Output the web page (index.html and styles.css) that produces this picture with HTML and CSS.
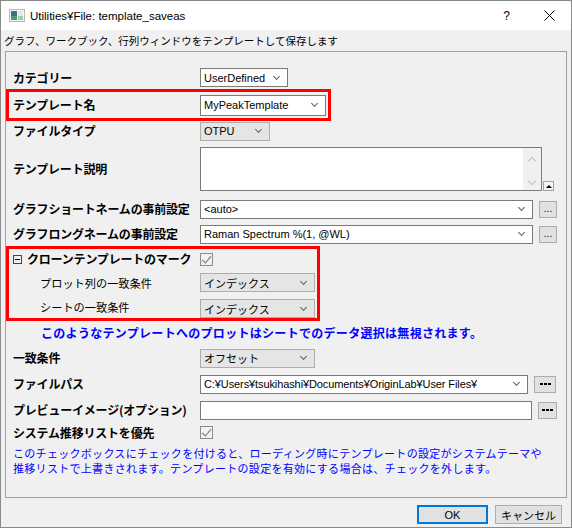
FILE: index.html
```html
<!DOCTYPE html>
<html lang="ja">
<head>
    <meta charset="UTF-8">
    <title>Utilities¥File: template_saveas</title>
    <link rel="stylesheet" href="styles.css">
</head>
<body>
<div class="dialog">
    <div class="titlebar">
        <svg class="app-icon" width="16" height="13" viewBox="0 0 16 13">
            <rect x="0.5" y="0.5" width="15" height="12" fill="#f6f6f6" stroke="#b8b8b8"/>
            <rect x="2" y="2" width="6" height="9" fill="#3b6f7a"/>
            <rect x="2" y="7" width="6" height="4" fill="#4f9a6a"/>
            <rect x="9" y="2" width="5" height="9" fill="#dfe8e3"/>
            <rect x="9" y="7" width="5" height="4" fill="#9ccfae"/>
        </svg>
        <span class="title">Utilities¥File: template_saveas</span>
        <span class="help">?</span>
        <svg class="close" width="11" height="11" viewBox="0 0 11 11">
            <path d="M0.5 0.5 L10.5 10.5 M10.5 0.5 L0.5 10.5" stroke="#000" stroke-width="1"/>
        </svg>
    </div>

    <div class="desc">グラフ、ワークブック、行列ウィンドウをテンプレートして保存します</div>

    <div class="panel">
        <div class="row h23">
            <label class="lbl">カテゴリー</label>
            <div class="combo" style="width:88px">UserDefined</div>
        </div>

        <div class="redbox box-name">
            <div class="row h26">
                <label class="lbl">テンプレート名</label>
                <div class="combo tall" style="width:126px">MyPeakTemplate</div>
            </div>
        </div>

        <div class="row h20">
            <label class="lbl">ファイルタイプ</label>
            <div class="combo off" style="width:70px">OTPU</div>
        </div>

        <div class="row memo-row">
            <label class="lbl">テンプレート説明</label>
            <div class="memo">
                <div class="memo-text"></div>
                <div class="vscroll">
                    <span class="chev up"></span>
                    <span class="chev down"></span>
                </div>
            </div>
            <div class="tiny-btn"><span class="tri"></span></div>
        </div>

        <div class="row h26 mt5">
            <label class="lbl">グラフショートネームの事前設定</label>
            <div class="combo" style="width:333px">&lt;auto&gt;</div>
            <div class="dots-btn" style="width:18px">...</div>
        </div>

        <div class="row h24">
            <label class="lbl">グラフロングネームの事前設定</label>
            <div class="combo" style="width:333px">Raman Spectrum %(1, @WL)</div>
            <div class="dots-btn" style="width:18px">...</div>
        </div>

        <div class="redbox box-clone">
            <div class="row h20">
                <label class="lbl"><svg class="collapse" width="9" height="9" viewBox="0 0 9 9">
                    <rect x="0.5" y="0.5" width="8" height="8" fill="none" stroke="#444"/>
                    <path d="M2 4.5 H7" stroke="#000"/>
                </svg>クローンテンプレートのマーク</label>
                <span class="check"></span>
            </div>
            <div class="row h27">
                <label class="lbl sub">プロット列の一致条件</label>
                <div class="combo off" style="width:115px">インデックス</div>
            </div>
            <div class="row h22">
                <label class="lbl sub">シートの一致条件</label>
                <div class="combo off bottom" style="width:115px">インデックス</div>
            </div>
        </div>

        <div class="note-bold">このようなテンプレートへのプロットはシートでのデータ選択は無視されます。</div>

        <div class="row h26">
            <label class="lbl">一致条件</label>
            <div class="combo off" style="width:115px">オフセット</div>
        </div>

        <div class="row h26">
            <label class="lbl">ファイルパス</label>
            <div class="combo path" style="width:328px">C:¥Users¥tsukihashi¥Documents¥OriginLab¥User Files¥</div>
            <div class="dots-btn dash" style="width:22px"><i></i><i></i><i></i></div>
        </div>

        <div class="row h26">
            <label class="lbl">プレビューイメージ(オプション)</label>
            <div class="field" style="width:332px"></div>
            <div class="dots-btn dash" style="width:19px"><i></i><i></i><i></i></div>
        </div>

        <div class="row h19">
            <label class="lbl">システム推移リストを優先</label>
            <span class="check"></span>
        </div>

        <div class="note">このチェックボックスにチェックを付けると、ローディング時にテンプレートの設定がシステムテーマや<br>推移リストで上書きされます。テンプレートの設定を有効にする場合は、チェックを外します。</div>
    </div>

    <div class="footer">
        <button class="btn default">OK</button>
        <button class="btn">キャンセル</button>
    </div>
</div>
</body>
</html>
```

FILE: styles.css
```css
body {
    margin: 0;
    background: #fff;
    font-family: "Noto Sans CJK JP", sans-serif;
    color: #000;
}
.dialog {
    width: 572px;
    height: 528px;
    box-sizing: border-box;
    border: 1px solid #8a8a8a;
    background: #f0f0f0;
}

/* title bar */
.titlebar {
    height: 29px;
    background: #fff;
    display: flex;
    align-items: center;
}
.app-icon {
    margin-left: 8px;
}
.title {
    margin-left: 5px;
    font: 11.5px "Liberation Sans", sans-serif;
}
.help {
    margin-left: auto;
    font: 12px "Liberation Sans", sans-serif;
}
.close {
    margin-left: 34px;
    margin-right: 16px;
}
.desc {
    height: 21px;
    line-height: 21px;
    padding-left: 3px;
    font-size: 10.5px;
    white-space: nowrap;
}

/* main group box */
.panel {
    margin-left: 4px;
    width: 562px;
    height: 447px;
    box-sizing: border-box;
    border: 1px solid #a0a0a0;
    padding-top: 14px;
}
.row {
    display: flex;
    align-items: center;
    padding-left: 7px;
}
.h19 { height: 19px; }
.h20 { height: 20px; }
.h22 { height: 22px; }
.h23 { height: 23px; }
.h24 { height: 24px; }
.h26 { height: 26px; }
.h27 { height: 27px; }
.mt5 { margin-top: 5px; }

.lbl {
    width: 187px;
    flex: none;
    box-sizing: border-box;
    display: flex;
    align-items: center;
    font-size: 12px;
    font-weight: bold;
    letter-spacing: -0.2px;
    line-height: 14px;
    white-space: nowrap;
}
.lbl.sub {
    padding-left: 27px;
    font-weight: normal;
    font-size: 11.2px;
    letter-spacing: 0;
}
.collapse {
    margin-right: 5px;
    flex: none;
}

.redbox {
    border: 3px solid #ff0000;
    box-sizing: border-box;
}
.redbox .row {
    padding-left: 4px;
}
.box-name {
    width: 325px;
    height: 32px;
}
.box-clone {
    width: 314px;
    height: 75px;
}

/* drop-down lists */
.combo {
    height: 19px;
    box-sizing: border-box;
    border: 1px solid #7a7a7a;
    background: #fff;
    display: flex;
    align-items: center;
    justify-content: space-between;
    padding: 0 8px 0 3px;
    font: 11px "Liberation Sans", "Noto Sans CJK JP", sans-serif;
    white-space: nowrap;
}
.combo::after {
    content: "";
    width: 4px;
    height: 4px;
    border-right: 1px solid #606060;
    border-bottom: 1px solid #606060;
    transform: rotate(45deg);
    margin-top: -3px;
    flex: none;
}
.combo.tall {
    height: 21px;
}
.combo.off {
    background: #e5e5e5;
    border-color: #adadad;
}
.combo.bottom {
    align-self: flex-end;
}
.combo.path {
    letter-spacing: -0.1px;
}

.field {
    height: 19px;
    box-sizing: border-box;
    border: 1px solid #7a7a7a;
    background: #fff;
}

.dots-btn {
    height: 17px;
    margin-left: 6px;
    box-sizing: border-box;
    border: 1px solid #adadad;
    background: #e1e1e1;
    font: 10px "Liberation Sans", sans-serif;
    line-height: 13px;
    text-align: center;
}
.dots-btn.dash {
    display: flex;
    align-items: center;
    justify-content: center;
    gap: 1px;
}
.dots-btn.dash i {
    width: 3px;
    height: 2px;
    background: #000;
}

/* description memo */
.memo-row {
    height: 44px;
    margin-top: 6px;
}
.memo {
    width: 342px;
    height: 44px;
    box-sizing: border-box;
    border: 1px solid #7a7a7a;
    background: #fff;
    display: flex;
}
.memo-text {
    flex: 1;
}
.vscroll {
    width: 18px;
    background: #f0f0f0;
    display: flex;
    flex-direction: column;
    justify-content: space-between;
    align-items: center;
    padding: 8px 0 6px;
    box-sizing: border-box;
}
.chev {
    width: 5px;
    height: 5px;
    border-left: 1.5px solid #c2c2c2;
    border-top: 1.5px solid #c2c2c2;
}
.chev.up {
    transform: rotate(45deg);
    margin-top: 2px;
}
.chev.down {
    transform: rotate(225deg);
}
.tiny-btn {
    align-self: flex-end;
    width: 11px;
    height: 10px;
    margin-left: 1px;
    box-sizing: border-box;
    border: 1px solid #a0a0a0;
    background: #f4f4f4;
    display: flex;
    align-items: center;
    justify-content: center;
}
.tri {
    width: 0;
    height: 0;
    border-left: 3px solid transparent;
    border-right: 3px solid transparent;
    border-bottom: 3px solid #000;
}

.check {
    width: 13px;
    height: 13px;
    box-sizing: border-box;
    border: 1px solid #8c8c8c;
    background: #f2f2f2;
    position: relative;
}
.check::after {
    content: "";
    position: absolute;
    left: 3px;
    top: 0px;
    width: 4px;
    height: 8px;
    border-right: 1.5px solid #707070;
    border-bottom: 1.5px solid #707070;
    transform: rotate(40deg);
}

/* blue hints */
.note-bold {
    height: 24px;
    line-height: 24px;
    padding-left: 35px;
    color: #0000ff;
    font-weight: bold;
    font-size: 12px;
    letter-spacing: 0.3px;
    white-space: nowrap;
}
.note {
    padding: 4px 0 0 7px;
    color: #0000ff;
    font-size: 11px;
    letter-spacing: 0.3px;
    line-height: 15px;
    white-space: nowrap;
}

/* bottom buttons */
.footer {
    display: flex;
    justify-content: flex-end;
    gap: 7px;
    padding: 7px 9px 0 0;
}
.btn {
    height: 19px;
    width: 67px;
    box-sizing: border-box;
    border: 1px solid #adadad;
    background: #e1e1e1;
    font: 11px "Liberation Sans", "Noto Sans CJK JP", sans-serif;
    padding: 0;
}
.btn.default {
    width: 71px;
    border: 2px solid #0078d7;
}
```
